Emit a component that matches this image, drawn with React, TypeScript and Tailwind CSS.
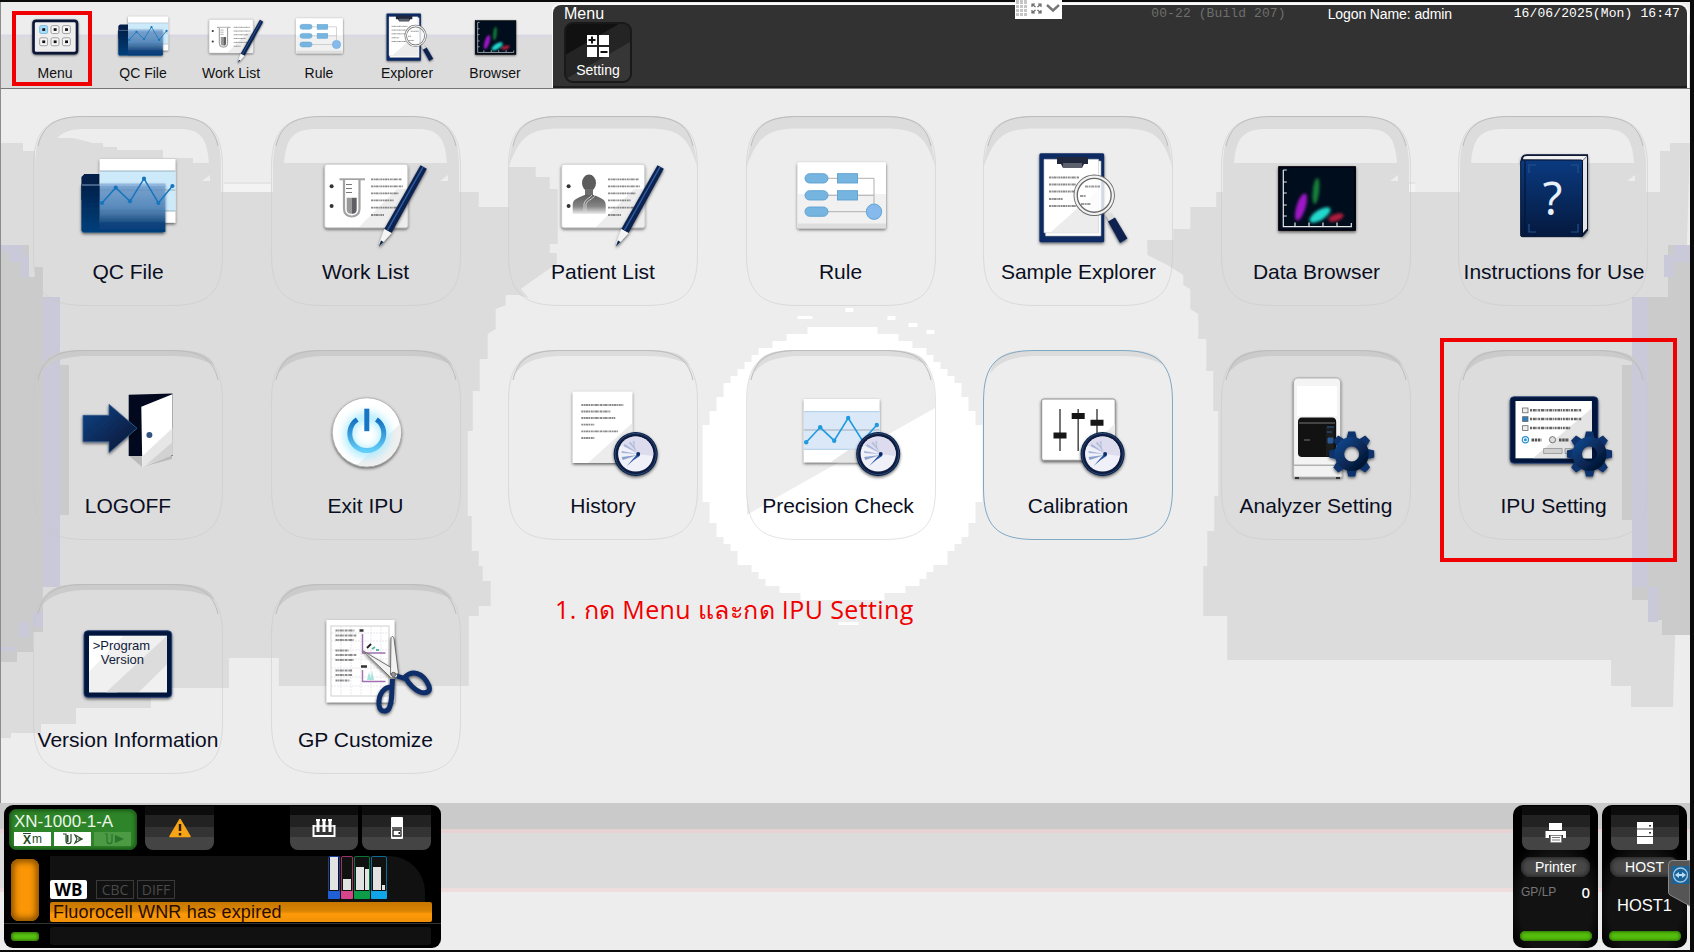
import type { ReactNode } from "react";

const NAVY = "#0b2450";

/* ---------- shared artwork ---------- */

function Defs() {
  return (
    <svg className="absolute h-0 w-0" aria-hidden="true">
      <defs>
        <linearGradient id="folder" x1="0" y1="0" x2="0" y2="1">
          <stop offset="0" stopColor="#6f9fd6" stopOpacity=".75" />
          <stop offset=".5" stopColor="#4a82bc" stopOpacity=".85" />
          <stop offset=".8" stopColor="#104680" />
          <stop offset="1" stopColor="#033c78" />
        </linearGradient>
        <linearGradient id="folderSide" x1="0" y1="0" x2="0" y2="1">
          <stop offset="0" stopColor="#04204a" />
          <stop offset="1" stopColor="#06407c" />
        </linearGradient>
        <linearGradient id="navy" x1="0" y1="0" x2="1" y2="1">
          <stop offset="0" stopColor="#124488" />
          <stop offset="1" stopColor="#02122e" />
        </linearGradient>
        <linearGradient id="book" x1="0" y1="0" x2="0" y2="1">
          <stop offset="0" stopColor="#0b3a80" />
          <stop offset="1" stopColor="#04193e" />
        </linearGradient>
        <linearGradient id="person" x1="0" y1="0" x2="0" y2="1">
          <stop offset="0" stopColor="#5c5c5c" />
          <stop offset=".6" stopColor="#858585" />
          <stop offset="1" stopColor="#ededed" />
        </linearGradient>
        <linearGradient id="power" x1="0" y1="0" x2="0" y2="1">
          <stop offset="0" stopColor="#1470c0" />
          <stop offset="1" stopColor="#62cdf8" />
        </linearGradient>
        <filter id="soft" x="-20%" y="-20%" width="140%" height="150%">
          <feDropShadow dx="0" dy="1.500" stdDeviation="1.800" floodOpacity=".6" />
        </filter>
        <filter id="blob" x="-50%" y="-50%" width="200%" height="200%">
          <feGaussianBlur stdDeviation="1.600" />
        </filter>
        <filter id="halo" x="-50%" y="-50%" width="200%" height="200%">
          <feGaussianBlur stdDeviation="4" />
        </filter>
      </defs>
    </svg>
  );
}

function Scribble({ x, ys, widths }: { x: number; ys: number[]; widths: number[] }) {
  return (
    <g stroke="#666" strokeWidth="1.800">
      {ys.map((y, i) => (
        <path key={y} d={`M${x} ${y}h${widths[i]}`} strokeDasharray="2.2 .5 1.2 .4 3 .4 1 .6" opacity=".75" />
      ))}
    </g>
  );
}

function Pen() {
  return (
    <g filter="url(#soft)">
      <path d="M149.500 49.200l6.300 3.600L120.500 117l-7.200-4z" fill={NAVY} />
      <path d="M152 51L116.500 114" stroke="#2f5ea6" strokeWidth="1.500" />
      <path d="M113.300 113l7.200 4-9.500 10.500-3 2.500.7-4z" fill="#f4f4f4" />
      <path d="M110 124.500l2.600 1.500-4.800 4.500z" fill={NAVY} />
    </g>
  );
}

function Card() {
  return (
    <>
      <rect x="53.700" y="48.300" width="83" height="63.400" rx="2.500" fill="#fff" stroke="#bdbdbd" strokeWidth=".6" filter="url(#soft)" />
      <path d="M88 111l38-38h10.300v36.500l-2 1.500z" fill="#ededed" />
      <circle cx="60.600" cy="70.300" r="2" fill="#333" />
      <circle cx="60.600" cy="90" r="2" fill="#333" />
      <Scribble x={100} ys={[63.3, 70.3, 77.3, 84.3, 91.7, 99]} widths={[31, 32, 28, 23, 26, 13]} />
    </>
  );
}

function Clock({ cx }: { cx: number }) {
  return (
    <g transform={`translate(${cx} 104)`}>
      <circle r="22" fill="#071c40" filter="url(#soft)" />
      <circle r="20.600" fill="none" stroke="#2a4878" strokeWidth="1" />
      <circle r="17.600" fill="#f0f0f8" />
      <path d="M-15-9A17.600 17.600 0 0 1 17.500 2L2 0z" fill="#dcdcee" />
      <g fill="#6f8cc0">
        <path d="M2-2l-9-9 2-1z" opacity=".4" />
        <path d="M2-1l-14-7 1-2z" opacity=".5" />
        <path d="M2 0l-16-1v-2z" opacity=".6" />
        <path d="M2 1l-15 5-1-3z" opacity=".8" />
        <path d="M-1-2l-2-11h2z" opacity=".3" />
      </g>
      <path d="M3-1.500L-9 12l7-6 6-4z" fill="#2a56a0" />
      <circle cx="2.500" cy="0" r="2" fill="#0c2c66" />
    </g>
  );
}

function Gear({ cx }: { cx: number }) {
  return (
    <g transform={`translate(${cx} 104)`} filter="url(#soft)">
      {[0, 45, 90, 135, 180, 225, 270, 315].map((a) => (
        <path key={a} d="M-5.500-14l2-8.500h7l2 8.500z" transform={`rotate(${a})`} fill="#0c326c" />
      ))}
      <circle r="12.300" fill="none" stroke="url(#navy)" strokeWidth="9.500" />
    </g>
  );
}

/* ---------- icons, drawn in tile coordinates ---------- */

const QcFile = (
  <>
    <path d="M48.400 61l3-3h17v6h62v20h-82z" fill="#04204a" />
    <rect x="66.700" y="43" width="75.700" height="63.700" fill="#fff" filter="url(#soft)" />
    <rect x="66.700" y="55" width="75.700" height="40" fill="#cdeafb" />
    <path d="M66.700 55h75.700M66.700 74h75.700M66.700 95h75.700" stroke="#93abb8" strokeWidth=".9" />
    <g filter="url(#soft)">
      <path d="M48.400 68.500h18.300v38h65.300v8l-2 2H50l-1.600-2z" fill="url(#folderSide)" />
      <rect x="66.700" y="67.500" width="65.700" height="48.500" fill="url(#folder)" opacity=".88" />
    </g>
    <path d="M49 69h82.500" stroke="#a9c3e2" strokeWidth=".8" />
    <path d="M69 87l13.700-15.300L97 85.300l14-22.600L125.400 87l14-17" fill="none" stroke="#1675bd" strokeWidth="1.500" />
    {[[69, 87], [82.7, 71.7], [97, 85.3], [111, 62.7], [125.4, 87], [139.4, 70]].map(([x, y]) => (
      <circle key={x} cx={x} cy={y} r="2.100" fill="#1675bd" />
    ))}
  </>
);

const WorkList = (
  <>
    <Card />
    <path d="M68.500 63.300H94" stroke="#a3a3a3" strokeWidth="2" />
    <path d="M73 64v29c0 10 15.500 10 15.500 0V64" fill="#fff" stroke="#a3a3a3" strokeWidth="2.200" />
    <path d="M75.700 81.700h5v16c-4 0-5-2-5-5z" fill="#999" />
    <path d="M80.700 81.700h5v11c0 3-1 5-5 5z" fill="#5f5f66" />
    <path d="M75 68.500h6M75 72.500h6M75 76.500h6" stroke="#777" strokeWidth="1" />
    <Pen />
  </>
);

const PatientList = (
  <>
    <Card />
    <ellipse cx="81" cy="67" rx="7" ry="8.500" fill="#5c5c5c" />
    <path d="M77 73h8v8h-8z" fill="#6c6c6c" />
    <path d="M64.700 98v-9c0-6 5-7 12-10h9c7 3 12 4 12 10v9z" fill="url(#person)" />
    <path d="M87 79c-2 5-9 5-9 10v8M84 79c-2 3-7 4-8 9v9" fill="none" stroke="#d8d8d8" strokeWidth=".9" />
    <Pen />
  </>
);

const Rule = (
  <>
    <rect x="51.500" y="46.300" width="88.500" height="66" rx="1.500" fill="#fff" filter="url(#soft)" />
    <path d="M52 78h88v30H52z" fill="#f1f1f1" />
    <path d="M52 107.500h88v4.500H52z" fill="#dedede" />
    <path d="M82 62.300h46V88M82 79.300h46M82 95.700h40" fill="none" stroke="#b0b0b0" strokeWidth="1" />
    <g fill="#76b5e0" stroke="#5b9fd0" strokeWidth=".9">
      <rect x="59" y="57.700" width="23" height="9.300" rx="4.600" />
      <rect x="59" y="74.700" width="23" height="9.300" rx="4.600" />
      <rect x="59" y="91" width="23" height="9.300" rx="4.600" />
      <rect x="91.500" y="57.700" width="20" height="9.300" />
      <rect x="91.500" y="74.700" width="20" height="9.300" />
      <circle cx="128" cy="95.700" r="7.700" fill="#86b9ec" />
    </g>
  </>
);

const Explorer = (
  <>
    <rect x="56.400" y="37.300" width="64.800" height="89" rx="1.500" fill="#0a2b63" filter="url(#soft)" />
    <path d="M62.500 45h55.500v75H62.500z" fill="#fff" stroke="#aaa" strokeWidth=".6" />
    <path d="M61 43.300h54.500v73.500H61z" fill="#fff" stroke="#c4c4c4" strokeWidth=".6" />
    <path d="M68 116l47-42v42z" fill="#ececec" />
    <path d="M74 41h31v7h-4l-2 4H80l-2-4h-4z" fill="#20263c" />
    <path d="M80 47h19v5H80z" fill="#5c5f6c" />
    <Scribble x={66} ys={[61.5, 68.5, 75.5, 83, 90]} widths={[30, 27, 26, 14, 28]} />
    <g filter="url(#soft)">
      <path d="M122.500 98.500l4-2 5 8-4.500 2z" fill="#ddd" />
      <path d="M125 105.500l7-4 12.500 21-7.500 4.500z" fill={NAVY} />
    </g>
    <circle cx="111.200" cy="79.300" r="18.500" fill="#fff" fillOpacity=".82" stroke="#666" strokeWidth="4.400" />
    <circle cx="111.200" cy="79.300" r="18.700" fill="none" stroke="#f2f2f2" strokeWidth="2.200" />
    <path d="M102 70.500h15M97 80h6M98 88h10" stroke="#999" strokeWidth="2" strokeDasharray="3 .6 2 .6" />
  </>
);

const Browser = (
  <>
    <rect x="57.700" y="50.700" width="76.700" height="63.600" fill="#05071c" stroke="#000" strokeWidth="1" filter="url(#soft)" />
    <g filter="url(#blob)">
      <ellipse cx="80" cy="91" rx="4.500" ry="14" transform="rotate(17 80 91)" fill="#a014c8" />
      <ellipse cx="95" cy="75" rx="3.200" ry="13" transform="rotate(6 95 75)" fill="#12803a" />
      <ellipse cx="99" cy="99" rx="12" ry="5" transform="rotate(-33 99 99)" fill="#20d8cc" />
      <ellipse cx="115" cy="101.500" rx="8" ry="3.500" transform="rotate(-20 115 101.500)" fill="#b01c3c" />
    </g>
    <path d="M62.300 54v56.700h68V107M62.300 54h3.500M62.300 66h3.500M62.300 77h3.500M62.300 89h3.500M62.300 100h3.500M74 110v-3.500M88 110v-3.500M102 110v-3.500M116 110v-3.500" fill="none" stroke="#e8e8e8" strokeWidth="1.200" />
  </>
);

const Book = (
  <>
    <path d="M62.700 46c0-5 2-7.700 6-7.700H130v76l-5.500 6.400z" fill="#071533" filter="url(#soft)" />
    <path d="M65 43.500c0-2.500 1.500-3.500 4-3.500h60l-4 4z" fill="#f0f0f0" />
    <path d="M124.500 45l4.500-4.500v72l-4.500 5z" fill="#e4e4e4" />
    <rect x="62.700" y="44" width="61.800" height="76.700" rx="1.500" fill="url(#book)" stroke="#04102a" strokeWidth="1" />
    <path d="M67 45v75" stroke="#04163a" strokeWidth="1.200" />
    <path d="M78 49h-7v8M113 49h7v8M78 116h-7v-8M113 116h7v-8" fill="none" stroke="#24508e" strokeWidth="1.200" />
    <text x="94.500" y="98.500" textAnchor="middle" fontSize="45" fill="#e8f0fa" className="font-['Noto_Sans','Open_Sans',sans-serif]">?</text>
  </>
);

const Logoff = (
  <>
    <path d="M96 105.700l13 11.300 30-8v-4z" fill="#000" opacity=".15" />
    <path d="M95.700 44.700l43.700-1.200v62.500H95.700z" fill="#02081e" />
    <path d="M108.300 56.700l31-12.400v60l-30 12.700z" fill="#fff" />
    <path d="M109.500 106l30-28v27l-30 12z" fill="#e6e6e6" />
    <path d="M113 115l26.500-23v13z" fill="#d2d2d2" />
    <path d="M50 65.300h26v-11l28 24-28 24.400v-11H50z" fill="url(#navy)" stroke="#3a5f90" strokeWidth=".8" filter="url(#soft)" />
    <circle cx="116.400" cy="85" r="3" fill="#34547e" />
  </>
);

const Power = (
  <>
    <circle cx="95.800" cy="82.300" r="34.500" fill="#fff" stroke="#999" strokeWidth=".6" filter="url(#soft)" />
    <path d="M86 115a34.500 34.500 0 0 0 43-41z" fill="#efefef" />
    <circle cx="95.800" cy="85" r="18" fill="none" stroke="#a8eaff" strokeWidth="9" filter="url(#halo)" />
    <path d="M86.200 69.500a17 17 0 1 0 19.200 0" fill="none" stroke="url(#power)" strokeWidth="5" />
    <rect x="93.300" y="58.700" width="5" height="22.500" fill="#1874c4" />
  </>
);

const History = (
  <>
    <rect x="64.700" y="41.700" width="59.600" height="71.300" fill="#fff" filter="url(#soft)" />
    <path d="M80 113l44.300-40v40z" fill="#ececec" />
    <Scribble x={73.3} ys={[55, 61.5, 68, 74.7, 81.3, 88]} widths={[42, 29, 34, 13, 37, 13]} />
    <Clock cx={127.7} />
  </>
);

const Precision = (
  <>
    <rect x="57.800" y="49" width="75.700" height="63.300" fill="#fff" filter="url(#soft)" />
    <rect x="57.800" y="61.700" width="75.700" height="37.600" fill="#dbe8f8" />
    <path d="M57.800 61.700h75.700M57.800 99.300h75.700" stroke="#9fc8e4" strokeWidth=".9" />
    <path d="M57.800 80h75.700" stroke="#9aa6b0" strokeWidth=".9" />
    <path d="M85 112l18-12.500h12v12.500z" fill="#e6e6e6" />
    <path d="M60.200 92.300l14-15 14 13.400 14-22.700 14.300 22.700L130.800 75" fill="none" stroke="#1f9ade" strokeWidth="1.600" />
    {[[60.2, 92.3], [74.2, 77.3], [88.2, 90.7], [102.2, 68], [130.8, 75]].map(([x, y]) => (
      <circle key={x} cx={x} cy={y} r="2.200" fill="#1f9ade" />
    ))}
    <Clock cx={132.2} />
  </>
);

const Calibration = (
  <>
    <rect x="58.700" y="49" width="73.500" height="61.300" rx="2" fill="#fff" stroke="#8d8d8d" strokeWidth="1" filter="url(#soft)" />
    <path d="M95 109.500l37-36v36z" fill="#ededed" />
    <path d="M77 59v42M95.200 59v42M114 59v42" stroke="#555" strokeWidth="1.600" />
    <path d="M70.500 82.500h13v6h-13zM88.700 63h13v6h-13zM107.500 69.700h13v6h-13z" fill="#161616" />
    <Clock cx={119.6} />
  </>
);

const Analyzer = (
  <>
    <g filter="url(#soft)">
      <path d="M72.600 115V32q0-4 4-4h39q4 0 4 4v83z" fill="#f4f4f4" stroke="#999" strokeWidth=".7" />
      <path d="M72.600 115.500h48.400v11.500H72.600z" fill="#f2f2f2" stroke="#aaa" strokeWidth=".7" />
    </g>
    <path d="M76 36h40v30H76z" fill="#fff" />
    <path d="M74 127h4v2h-4zM115 127h4v2h-4z" fill="#333" />
    <path d="M77 72q0-4.500 4-4.500h30q4.200 0 4.200 4.500v35H81q-4 0-4-4z" fill="#121212" />
    <path d="M78 73h36" stroke="#777" strokeWidth="1" />
    <path d="M105 76h8v30h-8z" fill="#1d1d1d" />
    <path d="M106 77h7M106 82h5M107 88h5v5h-5z" stroke="#2b5a96" fill="#2b5a96" strokeWidth="1" />
    <path d="M83 90h6" stroke="#555" strokeWidth="1.500" />
    <Gear cx={130.7} />
  </>
);

const IpuSetting = (
  <>
    <rect x="52" y="46.700" width="88" height="66.600" rx="4" fill="#06173c" stroke="#29467a" strokeWidth=".8" filter="url(#soft)" />
    <rect x="57.500" y="51" width="76.400" height="57.300" fill="#fff" />
    <path d="M75 108.300L134 58v50.300z" fill="#e4e4e4" />
    {[60.3, 69, 78].map((y, i) => (
      <g key={y}>
        <rect x="64.600" y={y - 2.3} width="5.400" height="4.800" fill={i === 1 ? "#2d7fc0" : "#eee"} stroke="#666" strokeWidth=".8" />
        <path d={`M72 ${y}h${i === 2 ? 41 : 52}`} stroke="#666" strokeWidth="2.400" strokeDasharray="2 .8 3 .6 1 .8" />
      </g>
    ))}
    <circle cx="67.400" cy="89.700" r="3.100" fill="#fff" stroke="#2a93d4" strokeWidth="1.200" />
    <circle cx="67.400" cy="89.700" r="1.500" fill="#2a93d4" />
    <circle cx="94.500" cy="89.700" r="3.100" fill="#ddd" stroke="#777" strokeWidth="1" />
    <path d="M73.500 90h10M101 90h10" stroke="#555" strokeWidth="3" strokeDasharray="2.500 .7" />
    <path d="M85.600 98.500h18.500v5H85.600zM107 98.500h14v5h-14z" fill="#cfcfcf" stroke="#888" strokeWidth=".7" />
    <Gear cx={131.5} />
  </>
);

const Version = (
  <>
    <rect x="51" y="46.700" width="87.700" height="66.600" rx="4" fill="#06173c" stroke="#1d3f78" strokeWidth=".8" filter="url(#soft)" />
    <rect x="56" y="51.700" width="78" height="56.600" fill="#fff" />
    <path d="M56 88l34-36h44v10l-50 46.300H56z" fill="#f0f0f0" />
    <path d="M73 108.300L134 51.700v30l-28 26.600z" fill="#dcdcdc" />
    <path d="M106 108.300l28-28v28z" fill="#f0f0f0" />
    <text fontSize="13" fill="#101c38" className="font-['Liberation_Sans',Arial,sans-serif]">
      <tspan x="59.700" y="66">&gt;Program</tspan>
      <tspan x="67.700" y="80.300">Version</tspan>
    </text>
  </>
);

const GpCustomize = (
  <>
    <rect x="55.500" y="36" width="68" height="82.300" fill="#fff" filter="url(#soft)" />
    <rect x="60" y="42" width="58" height="70" fill="none" stroke="#cfcfcf" strokeWidth="1" />
    <path d="M60 49h58M60 57h58M60 66h58M60 75h58M60 84h58M60 93h58M60 102h58M70 42v70M80 42v70M90 42v70M100 42v70M110 42v70" stroke="#dedee6" strokeWidth=".7" strokeDasharray="2 1" />
    <Scribble x={64.5} ys={[46.5, 51.5, 56, 66.5, 71, 76, 86.5, 91, 96.5]} widths={[19, 21, 18, 13, 21, 18, 17, 17, 14]} />
    <path d="M88.500 46.500h4M90 82.500h6" stroke="#333" strokeWidth="2.500" />
    <path d="M91.500 50v19h23M91.500 86v11.500h23" fill="none" stroke="#a070b0" strokeWidth="1.400" />
    <path d="M96 64l4-4" stroke="#222" strokeWidth="2" />
    <path d="M101 65l3-2M105 66h3" stroke="#58b8a8" strokeWidth="2" />
    <path d="M96 96l2-8 2 6 1-8 2 10z" fill="#a8e4dc" />
    <g filter="url(#soft)">
      <path d="M92.200 67l32 19 3 7-7 1z" fill="#f2f2f2" stroke="#555" strokeWidth=".8" />
      <path d="M120 53.700q2-3 3 1l4.500 35-8 1z" fill="#f2f2f2" stroke="#555" strokeWidth=".8" />
      <g fill="none" stroke="#0d2f68" strokeWidth="5">
        <path d="M126 92l9 3M134 93c7-7 18-5 24 9 2 6-3 8-9 6-7-3-11-8-15-15z" />
        <path d="M121.500 95l-.5 10M121 103c-8-1-14 8-13 18 1 8 9 8 11 1 2-6 2-12 2-19z" />
      </g>
      <circle cx="122.500" cy="90.500" r="2.200" fill="#999" stroke="#444" strokeWidth=".7" />
    </g>
  </>
);

const MenuIcon = (
  <>
    <rect x="54.500" y="51" width="82" height="61" rx="5" fill="#eee" stroke="#0a1736" strokeWidth="5" filter="url(#soft)" />
    {[0, 1, 2, 3, 4, 5].map((i) => {
      const x = 66 + (i % 3) * 21.5;
      const y = 60 + Math.floor(i / 3) * 23;
      return (
        <g key={i}>
          <rect x={x} y={y} width="15" height="15" rx="3" fill={i === 0 ? "#a8dcfa" : "#f4f4f4"} stroke={i === 0 ? "#6fb4dc" : "#8d8d8d"} strokeWidth="1.500" />
          <rect x={x + 5} y={y + 5} width="5.500" height="5" fill="#111" />
        </g>
      );
    })}
  </>
);

/* ---------- backdrop ---------- */

const steppedDisc = (cx: number, cy: number, rx: number, ry: number) => {
  const step = 7;
  const right: string[] = [];
  const left: string[] = [];
  for (let y = -ry; y < ry; y += step) {
    const w = Math.round((rx * Math.sqrt(Math.max(0, 1 - ((y + step / 2) / ry) ** 2))) / step) * step;
    right.push(`${cx + w},${cy + y} ${cx + w},${cy + Math.min(y + step, ry)}`);
    left.unshift(`${cx - w},${cy + Math.min(y + step, ry)} ${cx - w},${cy + y}`);
  }
  return [...right, ...left].join(" ");
};

const SIDE =
  "M0 143h22v8h12v41h444v15h30v-40h27v10h14v12h8v55h-8v9h7v11l-12 8-24 17 8 9-10-3h-13v10l-10 4v20l-8 5v25h-8v32h-7v40h-5v85h4v35h7v15h4v15h8v25h-12v10h-10v70h-190v-28h-50v30h-78v20h-75v16h-35v9h-30v5H0z";

const SHADE_RIGHT =
  "M1690 143h-20v8h-10v41h-444v15h-26v22h-17v11h-26v15l20 10 16 10v10l7 4v20l8 5v25h8v32h7v40h5v85h-4v35h-7v35h-4v50h24v44h384v26h20v21h42z";

function Backdrop() {
  return (
    <svg className="absolute inset-0 h-full w-full" viewBox="0 89 1690 714" preserveAspectRatio="none" aria-hidden="true">
      <rect y="89" width="1690" height="714" fill="#ededed" />
      <path d={SIDE} fill="#dcdcdc" />
      <path d={SHADE_RIGHT} fill="#dcdcdc" />
      <path d="M223 184h47v8h-47zM1369 184h46v8h-46z" fill="#f3f3f3" />
      <path d="M223 183h47M1369 183h46" stroke="#dcdcdc" />
      <path d="M0 245h28v32h6v-10h8v98h26v150H58v72H42v45H32v20H16v10H0z" fill="#cbcbcb" />
      <path d="M0 245h22v10h6v22h-8v-15h-12v-10H0zM42 297h17v290H42zM18 622h10v15H18zM32 612h10v15H32zM0 647h16v4H0z" fill="#c9c9d9" />
      <path d="M1690 245h-22v52h-36v68h-10v155h10v80h16v20h14v15h28z" fill="#cbcbcb" />
      <path d="M1690 245h-16v10h-10v22h10v-15h16zM1632 297h16v290h-16zM1648 587h10v35h-10z" fill="#c9c9d9" />
      <polygon points={steppedDisc(842, 465, 142, 138)} fill="#fff" />
      <path d="M797 316h15v3h-15zM845 308h8v4h-8zM887 316h8v4h-8zM908 323h9v4h-9zM926 330h8v4h-8zM838 622h20v3h-20z" fill="#fff" />
    </svg>
  );
}

/* ---------- menu tiles ---------- */

type Tone = "shade" | "light" | "glow" | "focus";
const OUTLINE =
  "M.5 52C.5 14 14 .5 52 .5H138C176 .5 189.500 14 189.500 52V138C189.500 176 176 189.500 138 189.500H52C14 189.500 .5 176 .5 138Z";

function TileShape({ tone, row, edge }: { tone: Tone; row: number; edge?: "left" | "right" }) {
  const onShade = tone === "shade";
  const top = row === 0;
  return (
    <svg className="absolute inset-0" width="190" height="190" aria-hidden="true">
      {onShade && top && (
        <>
          <path d="M2 80V52C2 14 14 1 52 1H138C176 1 188 14 188 52V80z" fill="#dcdcdc" />
          {edge ? (
            <path
              d="M24 22C30 16 38 13 50 13H146C168 13 174 22 176 47H160V42H130V34H84V31H70V27H60L40 22z"
              transform={edge === "right" ? "matrix(-1 0 0 1 190 0)" : undefined}
              fill="#ededed"
            />
          ) : (
            <path d="M13 47C15 22 22 13 46 13H146C168 13 174 22 176 47z" fill="#ededed" />
          )}
          <path d="M169 65l8-6v6z" fill="#ededed" />
        </>
      )}
      {tone === "glow" && <path d="M1 165V52C1 14 14 1 52 1H138C176 1 189 14 189 52V58L35 145z" fill="#ededed" />}
      {!(onShade && top) && (
        <path
          d={
            top
              ? "M1 50C4 12 16 0 52 0H138C174 0 186 12 189 50C180 20 170 12.500 140 12.500H52C22 12.500 12 20 1 50Z"
              : "M7 24C12 4 24 0 52 0H138C166 0 176 4 182 16C172 10 160 6 138 6H52C28 7 16 12 7 24Z"
          }
          fill={onShade ? "#cbcbcb" : "#dcdcdc"}
        />
      )}
      <path d={OUTLINE} fill="none" stroke={tone === "focus" ? "#7fa8c4" : "#c8c8c8"} strokeWidth="1" opacity={tone === "focus" ? 1 : 0.5} />
      {tone !== "focus" && <path d="M5 30C10 8 24 .5 52 .5H138C166 .5 180 8 185 30" fill="none" stroke="#bcbcbc" strokeWidth="1" />}
    </svg>
  );
}

const TILES: { label: string; icon: ReactNode; tone: Tone; row: number; edge?: "left" | "right"; nudge?: string }[] = [
  { label: "QC File", icon: QcFile, tone: "shade", row: 0, edge: "left" },
  { label: "Work List", icon: WorkList, tone: "shade", row: 0 },
  { label: "Patient List", icon: PatientList, tone: "light", row: 0 },
  { label: "Rule", icon: Rule, tone: "light", row: 0 },
  { label: "Sample Explorer", icon: Explorer, tone: "light", row: 0, nudge: "pl-px" },
  { label: "Data Browser", icon: Browser, tone: "shade", row: 0, nudge: "pl-[2px]" },
  { label: "Instructions for Use", icon: Book, tone: "shade", row: 0, nudge: "pl-[2px]" },
  { label: "LOGOFF", icon: Logoff, tone: "shade", row: 1 },
  { label: "Exit IPU", icon: Power, tone: "shade", row: 1 },
  { label: "History", icon: History, tone: "light", row: 1 },
  { label: "Precision Check", icon: Precision, tone: "glow", row: 1, nudge: "pr-[5px]" },
  { label: "Calibration", icon: Calibration, tone: "focus", row: 1 },
  { label: "Analyzer Setting", icon: Analyzer, tone: "shade", row: 1, nudge: "pl-px" },
  { label: "IPU Setting", icon: IpuSetting, tone: "shade", row: 1, nudge: "pl-px" },
  { label: "Version Information", icon: Version, tone: "shade", row: 2 },
  { label: "GP Customize", icon: GpCustomize, tone: "shade", row: 2 },
];

const TOOLBAR: { label: string; icon: ReactNode }[] = [
  { label: "Menu", icon: MenuIcon },
  { label: "QC File", icon: QcFile },
  { label: "Work List", icon: WorkList },
  { label: "Rule", icon: Rule },
  { label: "Explorer", icon: Explorer },
  { label: "Browser", icon: Browser },
];

/* ---------- header ---------- */

function Header() {
  return (
    <header className="relative flex h-[87px] w-[1690px] shrink-0 border-b border-l border-b-[#777] border-l-[#8c8c8c] bg-[linear-gradient(to_bottom,#ededed_0,#ededed_32px,#d8d8e4_33px,#dcdcdc_37px,#dcdcdc_100%)] pl-[10px]">
      <nav className="flex w-[542px]">
        {TOOLBAR.map((t) => (
          <div key={t.label} className="flex w-[88px] flex-col items-center">
            <svg width="88" height="63" viewBox="12 15.500 166 118.840">{t.icon}</svg>
            <span className="text-[14px] leading-[16px] text-[#111]">{t.label}</span>
          </div>
        ))}
      </nav>
      <div className="mt-[3px] flex w-[1134px] rounded-t-[8px] border-b-2 border-[#1c1c1c] bg-[#323232] shadow-[0_0_0_2px_#fafafa] [clip-path:inset(-3px_-3px_0_-1px)]">
        <div className="flex flex-col pl-[11px]">
          <span className="h-[17px] text-[16px] leading-[17px] text-white">Menu</span>
          <button className="flex h-[61px] w-[68px] flex-col items-center rounded-[9px] border-2 border-[#191919] bg-[linear-gradient(150deg,#111_0,#111_32%,#242424_33%,#242424_58%,#363636_59%)] pt-[10px]">
            <svg width="24" height="24" viewBox="0 0 24 24">
              <path d="M1 1h10v10H1zM13 1h10v10H13zM1 13h10v10H1zM13 13h10v10H13z" fill="#fff" />
              <path d="M6 2.500v7M2.500 6h7M14.500 18h7" stroke="#111" strokeWidth="2" />
            </svg>
            <span className="mt-[4px] text-[14px] leading-[16px] text-white">Setting</span>
          </button>
        </div>
        <div className="flex grow justify-end pr-[7px] pt-px text-[14px] leading-[16px] text-white">
          <span className="mr-[42px] whitespace-pre font-['Liberation_Mono','DejaVu_Sans_Mono',monospace] text-[13px] tracking-[0.1px] text-[#6e6e6e]">00-22 (Build 207)</span>
          <span className="w-[186px] whitespace-nowrap tracking-[-0.1px]">Logon Name: admin</span>
          <span className="whitespace-pre font-['Liberation_Mono','DejaVu_Sans_Mono',monospace] text-[13px] tracking-[0.12px]">16/06/2025(Mon) 16:47</span>
        </div>
      </div>
      <div className="absolute left-[1014px] top-[-2px] flex h-[19px] w-[47px] items-start bg-white">
        <svg width="47" height="19" viewBox="0 0 47 19">
          <path d="M1 0h11v16H1z" fill="#c6c6c6" />
          <path d="M1 4.500h11M1 8.500h11M1 12.500h11M4.500 0v17M8.500 0v17" stroke="#fff" strokeWidth="1" />
          <path d="M17 7V4h3M17.500 4.500l3 2.500M26 7V4h-3M25.500 4.500l-3 2.500M17 10v3h3M17.500 12.500l3-2.500M26 10v3h-3M25.500 12.500l-3-2.500" fill="none" stroke="#666" strokeWidth="1.200" />
          <path d="M32 5l6 5.500L44 5" fill="none" stroke="#777" strokeWidth="2.400" />
        </svg>
      </div>
      <div className="absolute left-[11px] top-[9px] h-[75px] w-[80px] border-4 border-[#f00000]" />
    </header>
  );
}

/* ---------- status bar ---------- */

const KEY = "flex h-[44px] items-center justify-center rounded-b-[8px] bg-[linear-gradient(to_bottom,#0c0c0c_0,#0c0c0c_20%,#222_21%,#222_47%,#333_48%,#333_70%,#444_71%)]";

const REAGENTS = [
  { w: 12, color: "#1f5fd8", edge: "#1c3f9c", levels: [[8, 33]] },
  { w: 12, color: "#d4458c", edge: "#9c3468", levels: [[8, 11]] },
  { w: 16, color: "#0c9c48", edge: "#0a7438", levels: [[8, 23], [4, 21]] },
  { w: 16, color: "#10a4e8", edge: "#0c6c94", levels: [[8, 23], [3, 5]] },
];

function AnalyzerPanel() {
  return (
    <section className="mt-[2px] flex h-[143px] w-[437px] flex-col rounded-[9px] bg-black">
      <div className="flex h-[45px] pt-px">
        <div className="ml-[5px] mt-[3px] flex h-[41px] w-[128px] flex-col rounded-[7px] border border-[#1c5c1c] bg-[#2e8428] pl-[4px] pt-[2px] shadow-[inset_0_0_4px_#12420f]">
          <span className="h-[20px] whitespace-nowrap text-[17px] leading-[20px] text-[#eaf6e8]">XN-1000-1-A</span>
          <div className="flex gap-[3px]">
            <span className="flex h-[14px] w-[37px] items-center justify-center bg-white text-[12px] font-bold leading-[14px] text-[#234a23]">
              <span className="mr-px inline-block h-[12px] border-t border-[#234a23] leading-[12px]">X</span>
              <span className="font-normal">m</span>
            </span>
            <svg width="37" height="14" viewBox="0 0 37 14" className="bg-white">
              <path d="M9 2h3v7c0 3.500 5 3.500 5 0V2" fill="none" stroke="#2b4b2b" strokeWidth="1.200" />
              <path d="M13.500 3v7" stroke="#2b4b2b" strokeWidth="2" />
              <path d="M21 3l7 4-7 4 2-4zM29 7h-5" fill="none" stroke="#2b4b2b" strokeWidth="1.200" />
            </svg>
            <svg width="37" height="14" viewBox="0 0 37 14" className="bg-[#4c9a44]">
              <path d="M11 2h2v7c0 3.500 5 3.500 5 0V2" fill="none" stroke="#2a742a" strokeWidth="1.200" />
              <path d="M21 3l9 4-9 4z" fill="#2a742a" />
            </svg>
          </div>
        </div>
        <div className={`${KEY} ml-[8px] w-[69px]`}>
          <svg width="24" height="22" viewBox="0 0 24 22">
            <path d="M12 2.500L22 19.500H2z" fill="#f7a416" stroke="#f7a416" strokeWidth="1.500" strokeLinejoin="round" />
            <path d="M12 7v7M12 16v2.400" stroke="#2b1c00" strokeWidth="2.400" />
          </svg>
        </div>
        <div className={`${KEY} ml-[76px] w-[68px]`}>
          <svg width="24" height="20" viewBox="0 0 24 20">
            <path d="M1.500 7v11h21V7" fill="none" stroke="#fff" strokeWidth="2" />
            <path d="M4 1h4v2H4zM10 1h4v2h-4zM16 1h4v2h-4zM4.500 3h3v11h-3zM10.500 3h3v11h-3zM16.500 3h3v11h-3z" fill="#fff" />
            <path d="M1 8h22" stroke="#fff" strokeWidth="1.500" />
          </svg>
        </div>
        <div className={`${KEY} ml-[4px] w-[69px]`}>
          <svg width="14" height="24" viewBox="0 0 14 24">
            <rect x="1" y="1" width="12" height="22" rx="1" fill="#fff" />
            <path d="M2 12h10" stroke="#222" strokeWidth="1.400" />
            <path d="M3 14h8v6H3z" fill="none" stroke="#222" strokeWidth="1.300" />
            <path d="M8.500 16h1.500v2H8.500z" fill="#222" />
          </svg>
        </div>
      </div>
      <div className="flex h-[74px] border-b border-[#333] pt-[6px]">
        <div className="ml-[7px] mt-[3px] h-[62px] w-[28px] rounded-[8px] bg-[#fb9606] shadow-[inset_0_0_6px_3px_#8a5000]" />
        <div className="ml-[11px] flex w-[382px] flex-col">
          <div className="flex h-[46px] items-end rounded-tr-[36px] bg-[#111] pb-[3px] [width:375px]">
            <span className="h-[19px] w-[37px] rounded-[2px] bg-white text-center font-['Open_Sans','Noto_Sans',sans-serif] text-[17px] font-bold leading-[19px] text-black">WB</span>
            <span className="ml-[9px] h-[19px] w-[38px] border border-[#3a3a3a] text-center font-['Open_Sans',sans-serif] text-[14px] leading-[17px] text-[#4a4a4a]">CBC</span>
            <span className="ml-[3px] h-[19px] w-[38px] border border-[#3a3a3a] text-center font-['Open_Sans',sans-serif] text-[14px] leading-[17px] text-[#4a4a4a]">DIFF</span>
            <div className="ml-[153px] flex gap-px">
              {REAGENTS.map((r) => (
                <svg key={r.color} width={r.w} height="43">
                  <rect x=".5" y=".5" width={r.w - 1} height="42" rx="1.500" fill="#111" stroke={r.edge} />
                  <rect x="0" y="35" width={r.w} height="8" rx="1" fill={r.color} />
                  {r.levels.map(([w, h], i) => (
                    <rect key={i} x={i === 0 ? 2 : 11} y={34 - h} width={w} height={h} fill="#e2e2e2" />
                  ))}
                </svg>
              ))}
            </div>
          </div>
          <div className="h-[20px] whitespace-nowrap rounded-[2px] bg-[linear-gradient(to_bottom,#c87800,#d88404_45%,#ff9a08_60%,#f09008)] pl-[3px] text-[18px] leading-[20px] tracking-[0.18px] text-[#2a0c00]">
            Fluorocell WNR has expired
          </div>
        </div>
      </div>
      <div className="flex items-center pt-[3px]">
        <div className="ml-[7px] h-[9px] w-[28px] rounded-[4px] bg-[#58c010] shadow-[inset_0_0_3px_1px_#2c6c08]" />
        <div className="ml-[11px] h-[18px] w-[381px] rounded-[3px] bg-[#111]" />
      </div>
    </section>
  );
}

function DevicePanel({ label, icon, children }: { label: string; icon: ReactNode; children: ReactNode }) {
  return (
    <section className="mt-[2px] flex h-[143px] w-[85px] flex-col items-center rounded-[10px] bg-black bg-[radial-gradient(ellipse_60%_50%_at_50%_70%,#121212_0,#121212_70%,#000_100%)] pt-px">
      <div className={`${KEY} w-[68px] pt-[10px]`}>{icon}</div>
      <div className="mt-[7px] flex h-[20px] w-[69px] items-center justify-center rounded-[9px] bg-[#484848] pt-px text-[14px] text-white shadow-[inset_0_0_4px_1px_#222]">{label}</div>
      <div className="h-[54px] w-[69px]">{children}</div>
      <div className="h-[10px] w-[72px] rounded-[5px] bg-[#54bc0c] shadow-[inset_0_0_3px_1px_#2e7208]" />
    </section>
  );
}

function StatusBar() {
  return (
    <footer className="relative flex h-[147px] w-[1690px] justify-between bg-[linear-gradient(to_bottom,#cacaca_0,#cacaca_26px,#e6d2d2_26px,#e6d2d2_30px,#dcdcdc_30px,#dcdcdc_85px,#efdcdc_85px,#efdcdc_89px,#ededed_89px)] pl-[4px] pr-[3px]">
      <AnalyzerPanel />
      <div className="flex gap-[4px]">
        <DevicePanel
          label="Printer"
          icon={
            <svg width="24" height="22" viewBox="0 0 24 22">
              <path d="M5 1h13v7H5zM1.500 9h20.500v7H19v-3H5v3H1.500z" fill="#fff" />
              <path d="M6.500 13.500h11v7h-11z" fill="#fff" stroke="#777" strokeWidth=".6" />
              <path d="M8 15.500h8M8 18h8" stroke="#777" strokeWidth="1" />
            </svg>
          }
        >
          <div className="flex items-center justify-between pt-[5px] leading-[20px]">
            <span className="text-[12px] text-[#777]">GP/LP</span>
            <span className="font-['Noto_Sans','Open_Sans',sans-serif] text-[15px] font-medium text-white">0</span>
          </div>
        </DevicePanel>
        <DevicePanel
          label="HOST"
          icon={
            <svg width="18" height="24" viewBox="0 0 18 24">
              <path d="M1 1h16v22H1z" fill="#fff" />
              <path d="M1 8h16M1 15.500h16" stroke="#444" strokeWidth="1.200" />
              <path d="M13 4h2v1.500h-2zM13 11h2v1.500h-2z" fill="#333" />
            </svg>
          }
        >
          <div className="pt-[18px] text-center text-[16.500px] leading-[20px] text-white">HOST1</div>
        </DevicePanel>
      </div>
      <svg className="absolute left-[1668px] top-[57px]" width="22" height="48" viewBox="0 0 22 48">
        <path d="M4 .5h18V46L2 35Q.5 34 .5 32V5Q.5 1 4 .5z" fill="#555" stroke="#8a8a8a" strokeWidth="1" />
        <rect x="3.500" y="6" width="18" height="18" fill="#1d6296" />
        <circle cx="12.500" cy="15" r="7" fill="none" stroke="#9cc6e6" strokeWidth="1.300" />
        <path d="M7 15l4-3v2h3v-2l4 3-4 3v-2h-3v2z" fill="#b8dcf4" />
      </svg>
    </footer>
  );
}

/* ---------- page ---------- */

export default function App() {
  return (
    <div className="relative flex h-[952px] w-[1694px] flex-col overflow-hidden bg-[#0a0a0a] pt-[2px] font-['Liberation_Sans',Arial,sans-serif]">
      <Defs />
      <Header />
      <main className="relative h-[714px] w-[1690px] shrink-0 overflow-hidden border-l border-[#8c8c8c]">
        <Backdrop />
        <div className="relative grid grid-cols-[repeat(7,190px)] gap-x-[47.500px] gap-y-[44px] pl-[32px] pt-[27px]">
          {TILES.map((t) => (
            <div key={t.label} className="relative flex h-[190px] flex-col items-center">
              <TileShape tone={t.tone} row={t.row} edge={t.edge} />
              <svg className="relative shrink-0" width="190" height="144" viewBox="0 0 190 144">{t.icon}</svg>
              <span className={`relative whitespace-nowrap text-[21px] leading-[24px] text-[#0a0e22] ${t.nudge ?? ""}`}>{t.label}</span>
            </div>
          ))}
        </div>
        <div className="absolute left-[1439px] top-[249px] h-[224px] w-[237px] border-4 border-[#f00000]" />
        <p className="absolute left-[554px] top-[502px] whitespace-nowrap font-['Open_Sans','Noto_Sans',sans-serif] text-[25px] leading-[36px] tracking-[0.4px] text-[#f00000]">
          1. กด Menu และกด IPU Setting
        </p>
      </main>
      <StatusBar />
    </div>
  );
}
